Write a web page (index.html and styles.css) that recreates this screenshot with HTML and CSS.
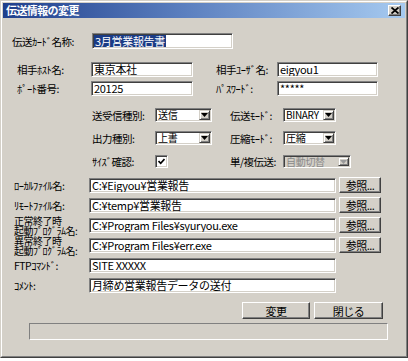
FILE: index.html
```html
<!DOCTYPE html>
<html lang="ja">
<head>
<meta charset="utf-8">
<title>伝送情報の変更</title>
<link rel="stylesheet" href="styles.css">
</head>
<body>
<div class="window">
  <div class="frame">
    <div class="titlebar">
      <span class="title">伝送情報の変更</span>
      <span class="close"><svg width="8" height="7" viewBox="0 0 8 7"><path d="M0.5 0.5L7.5 6.5M7.5 0.5L0.5 6.5" stroke="#000" stroke-width="1.8"/></svg></span>
    </div>
    <div class="content">
      <div class="row row-a">
        <span class="lbl la">伝送ｶｰﾄﾞ名称:</span>
        <div class="field fa"><span class="selected">3月営業報告書</span></div>
      </div>
      <div class="row row-b">
        <span class="lbl lb">相手ﾎｽﾄ名:</span>
        <div class="field fb">東京本社</div>
        <span class="lbl lb2">相手ﾕｰｻﾞ名:</span>
        <div class="field fb2">eigyou1</div>
      </div>
      <div class="row row-c">
        <span class="lbl lb">ﾎﾟｰﾄ番号:</span>
        <div class="field fb">20125</div>
        <span class="lbl lb2">ﾊﾟｽﾜｰﾄﾞ:</span>
        <div class="field fb2">*****</div>
      </div>
      <div class="row row-d">
        <span class="lbl ld">送受信種別:</span>
        <div class="field select sd"><span class="val">送信</span><span class="dd"><svg width="7" height="4" viewBox="0 0 7 4"><path d="M0 0H7L3.5 4Z" fill="#000"/></svg></span></div>
        <span class="lbl ld2">伝送ﾓｰﾄﾞ:</span>
        <div class="field select sd2"><span class="val">BINARY</span><span class="dd"><svg width="7" height="4" viewBox="0 0 7 4"><path d="M0 0H7L3.5 4Z" fill="#000"/></svg></span></div>
      </div>
      <div class="row row-e">
        <span class="lbl ld">出力種別:</span>
        <div class="field select sd"><span class="val">上書</span><span class="dd"><svg width="7" height="4" viewBox="0 0 7 4"><path d="M0 0H7L3.5 4Z" fill="#000"/></svg></span></div>
        <span class="lbl ld2">圧縮ﾓｰﾄﾞ:</span>
        <div class="field select sd2"><span class="val">圧縮</span><span class="dd"><svg width="7" height="4" viewBox="0 0 7 4"><path d="M0 0H7L3.5 4Z" fill="#000"/></svg></span></div>
      </div>
      <div class="row row-f">
        <span class="lbl ld">ｻｲｽﾞ確認:</span>
        <span class="check"><svg width="7" height="7" viewBox="0 0 7 7"><path d="M0.5 3L2.7 5.3L6.5 1" stroke="#000" stroke-width="1.7" fill="none"/></svg></span>
        <span class="lbl lf2">単/複伝送:</span>
        <div class="field select sf disabled"><span class="val">自動切替</span><span class="dd"><svg width="7" height="4" viewBox="0 0 7 4"><path d="M0 0H7L3.5 4Z" fill="#9a9a9a"/></svg></span></div>
      </div>
      <div class="frows">
        <div class="row frow">
          <span class="lbl lg">ﾛｰｶﾙﾌｧｲﾙ名:</span>
          <div class="field fg">C:¥Eigyou¥営業報告</div>
          <span class="btn browse">参照...</span>
        </div>
        <div class="row frow">
          <span class="lbl lg">ﾘﾓｰﾄﾌｧｲﾙ名:</span>
          <div class="field fg">C:¥temp¥営業報告</div>
          <span class="btn browse">参照...</span>
        </div>
        <div class="row frow">
          <span class="lbl lg two">正常終了時<br>起動ﾌﾟﾛｸﾞﾗﾑ名:</span>
          <div class="field fg">C:¥Program Files¥syuryou.exe</div>
          <span class="btn browse">参照...</span>
        </div>
        <div class="row frow">
          <span class="lbl lg two">異常終了時<br>起動ﾌﾟﾛｸﾞﾗﾑ名:</span>
          <div class="field fg">C:¥Program Files¥err.exe</div>
          <span class="btn browse">参照...</span>
        </div>
        <div class="row frow">
          <span class="lbl lg">FTPｺﾏﾝﾄﾞ:</span>
          <div class="field fg">SITE XXXXX</div>
        </div>
        <div class="row frow">
          <span class="lbl lg">ｺﾒﾝﾄ:</span>
          <div class="field fg">月締め営業報告データの送付</div>
        </div>
      </div>
      <div class="row actions">
        <span class="btn act">変更</span>
        <span class="btn act act2">閉じる</span>
      </div>
      <div class="status"></div>
    </div>
  </div>
</div>
</body>
</html>
```

FILE: styles.css
```css
* { box-sizing: border-box; }
html, body { margin: 0; padding: 0; background: #ffffff; }
body {
  width: 408px; height: 361px; overflow: hidden;
  font-family: "Noto Sans CJK JP", "Noto Sans", sans-serif;
  font-size: 11px; color: #000;
}
.window {
  width: 408px; height: 358px;
  background: #d4d0c8;
  border: 1px solid; border-color: #d4d0c8 #404040 #404040 #d4d0c8;
}
.frame {
  height: 100%;
  border: 1px solid; border-color: #ffffff #808080 #808080 #ffffff;
  padding: 1px;
}
.titlebar {
  height: 15px;
  display: flex; align-items: center; justify-content: space-between;
  padding: 0 4px 0 3px;
  background: linear-gradient(to right, #1f3f8c 0%, #5b7fbf 45%, #a6caf0 100%);
}
.title {
  color: #fff; font-weight: bold; font-size: 11px; line-height: 15px;
  letter-spacing: -0.6px;
}
.close {
  width: 13px; height: 11px;
  display: flex; align-items: center; justify-content: center;
  background: #d4d0c8;
  border: 1px solid; border-color: #ffffff #404040 #404040 #ffffff;
  box-shadow: inset -1px -1px #808080;
}
.content { display: flex; flex-direction: column; }
.row { display: flex; align-items: center; }
.lbl { white-space: nowrap; letter-spacing: -0.5px; line-height: 13px; font-size: 10.5px; }

.field {
  background: #fff; white-space: nowrap; overflow: hidden;
  border: 1px solid; border-color: #808080 #ffffff #ffffff #808080;
  box-shadow: inset 1px 1px #404040, inset -1px -1px #d4d0c8;
  padding: 0 2px; line-height: 13px; height: 15px;
  letter-spacing: -0.3px;
}

.row-a { margin-top: 15px; height: 16px; padding-left: 9px; }
.la { width: 80px; }
.fa { width: 141px; height: 16px; padding: 1px 1px; line-height: 12px; }
.selected { display: inline-block; background: #1a3b85; color: #fff; padding: 0 1px; line-height: 12px; }

.row-b { margin-top: 13px; height: 15px; padding-left: 14px; }
.row-c { margin-top: 4px; height: 15px; padding-left: 14px; }
.lb { width: 74px; }
.fb { width: 102px; }
.lb2 { width: 61px; margin-left: 23px; }
.fb2 { width: 101px; }

.row-d { margin-top: 12px; height: 14px; padding-left: 89px; }
.row-e { margin-top: 9px; height: 14px; padding-left: 89px; }
.row-f { margin-top: 10px; height: 13px; padding-left: 89px; }
.ld { width: 63px; }
.ld2 { width: 53px; margin-left: 18px; }
.lf2 { width: 53px; margin-left: 62px; }

.select {
  display: flex; align-items: stretch; height: 14px;
  padding: 1px 1px 1px 2px; overflow: visible;
  font-size: 10px; letter-spacing: -0.3px;
}
.select .val { flex: 1; line-height: 10px; padding-top: 0; overflow: visible; }
.sd { width: 57px; }
.sd2 { width: 53px; }
.sf { width: 68px; height: 13px; }
.dd {
  width: 11px; flex: none;
  display: flex; align-items: center; justify-content: center;
  background: #d4d0c8;
  border: 1px solid; border-color: #d4d0c8 #404040 #404040 #d4d0c8;
  box-shadow: inset 1px 1px #fff, inset -1px -1px #808080;
}
.disabled { background: #d4d0c8; color: #8a8a8a; }

.check {
  width: 13px; height: 13px;
  display: flex; align-items: center; justify-content: center;
  background: #fff;
  border: 1px solid; border-color: #808080 #ffffff #ffffff #808080;
  box-shadow: inset 1px 1px #404040, inset -1px -1px #d4d0c8;
}

.frows { margin-top: 9px; display: flex; flex-direction: column; }
.frow { height: 20px; align-items: flex-start; padding-left: 11px; }
.lg { width: 75px; margin-top: 1px; line-height: 15px; }
.lg.two { line-height: 10px; font-size: 10px; margin-top: -1px; }
.fg { width: 247px; margin-top: 1px; }

.btn {
  display: flex; align-items: center; justify-content: center;
  background: #d4d0c8; white-space: nowrap;
  border: 1px solid; border-color: #ffffff #404040 #404040 #ffffff;
  box-shadow: inset -1px -1px #808080;
  letter-spacing: -0.5px;
}
.browse { width: 42px; height: 16px; margin-left: 3px; }

.actions { margin-top: 5px; height: 17px; padding-left: 239px; }
.act { width: 68px; height: 17px; }
.act2 { width: 69px; margin-left: 4px; }

.status {
  margin-top: 4px; margin-left: 26px;
  width: 359px; height: 17px;
  border: 1px solid; border-color: #808080 #ffffff #ffffff #808080;
}
```
